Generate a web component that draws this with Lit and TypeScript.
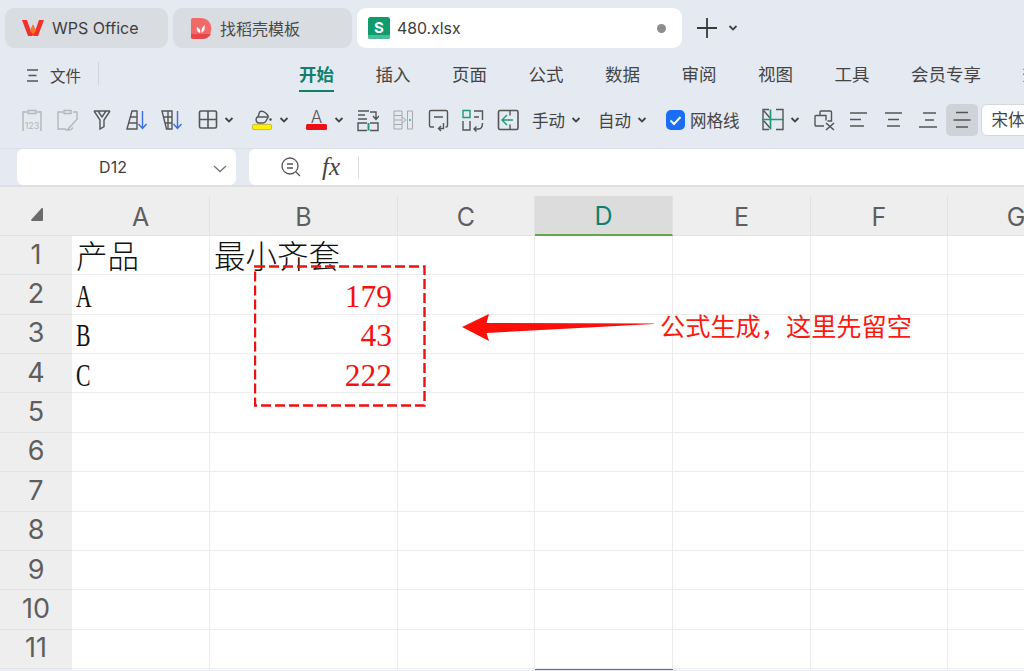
import { LitElement, css, html, svg } from "lit";
import { customElement } from "lit/decorators.js";

const COLS = ["A", "B", "C", "D", "E", "F", "G"];
const ROWS = [1, 2, 3, 4, 5, 6, 7, 8, 9, 10, 11, 12];
const RIBBON = ["开始", "插入", "页面", "公式", "数据", "审阅", "视图", "工具", "会员专享", "效率"];

const CELLS: Record<string, { text: string; kind: string }> = {
  A1: { text: "产品", kind: "cjk" },
  B1: { text: "最小齐套", kind: "cjk" },
  A2: { text: "A", kind: "latin" },
  A3: { text: "B", kind: "latin" },
  A4: { text: "C", kind: "latin" },
  B2: { text: "179", kind: "num" },
  B3: { text: "43", kind: "num" },
  B4: { text: "222", kind: "num" },
};

const icon = (body: unknown, w = 22, h = 24) =>
  html`<svg class="ico" width=${w} height=${h} viewBox="0 0 ${w} ${h}" fill="none" stroke="#555" stroke-width="1.4">${body}</svg>`;

const chev = html`<svg class="chev" width="10" height="6" viewBox="0 0 10 6" fill="none" stroke="#444" stroke-width="1.8"><path d="M1.5 1l3.5 3.5L8.5 1" /></svg>`;

const ICONS = {
  pasteValue: icon(svg`<g stroke="#b4b6b8"><path d="M6 4H2v18h1M16 4h4v18h-1M7 2.500h8v3H7z" /></g>
    <text x="11" y="21" text-anchor="middle" font-size="9" fill="#b4b6b8" stroke="none" font-family="Inter">123</text>`),
  pasteFormat: icon(svg`<g stroke="#b4b6b8"><path d="M7 4H2v17h8M17 4h4v6M8 2.500h7v3H8zM22 10l-7 8M15 18c-2 1-2 3-4 4 3 .5 5-.5 6-2.500" /></g>`),
  filter: icon(svg`<path d="M3 3h16M3 3l6 9v9l4-2.500V12l6-9M7 3l4 6 4-6" />`),
  sortAsc: icon(svg`<path d="M6 3h5v18H1zM4.500 9h6.500M3 15h8" /><path stroke="#3a6fe4" d="M16.500 3v17M12.500 16l4 4.500 4-4.500" />`),
  sortDesc: icon(svg`<path d="M1 3h10v18H5.500zM2.500 9h8.500M4 15h7M7 3v18" /><path stroke="#3a6fe4" d="M16.500 3v17M12.500 16l4 4.500 4-4.500" />`),
  borders: icon(svg`<rect x="3.500" y="3" width="17" height="17" rx="1.500" stroke-width="1.600" /><path stroke-width="1.600" d="M12 3v17M3.500 11.500h17" />`),
  fill: icon(svg`<path d="M6 9c-2 3-.5 6 2 6h4c1.500 0 2.500-1 3-2l2.500-4.500M6 9h11.500M7 9l1.500-5c2-2 6 0 8 3l1 1.500" /><circle cx="19.500" cy="11.500" r="1.200" fill="#444" stroke="none" />
    <rect x="1.400" y="16.400" width="19.200" height="5.200" rx="1.500" fill="#ffef00" stroke="#bdb12a" stroke-width=".8" />`),
  fontColor: icon(svg`<text x="10.500" y="14.500" text-anchor="middle" font-size="17" font-weight="300" fill="#555" stroke="none" font-family="Inter">A</text>
    <rect x="0" y="16" width="21" height="6" rx="1.500" fill="#ee0f14" stroke="none" />`),
  indent: icon(svg`<path d="M1 3h11M1 7h7M1 11h9M13 4h6v7M16 8l3 3.500L22 8M10 15H1v7.500h9M13 15h8v7.500h-8" /><path stroke="#1d9a77" stroke-width="2" d="M11.500 15v7.500" />`),
  split: icon(svg`<g stroke="#a9a9a9" stroke-width="1"><path d="M2 3h8v18H2zM2 7.500h8M2 12h8M2 16.500h8M10 9l4 3-4 3M15.500 3h5v18h-5z" /></g><circle cx="18" cy="12" r="1" fill="#35a584" stroke="none" />`),
  wrap: icon(svg`<path d="M7 19H4a1.500 1.500 0 0 1-1.500-1.500V4A1.500 1.500 0 0 1 4 2.500h15A1.500 1.500 0 0 1 20.500 4v13.500A1.500 1.500 0 0 1 19 19h-.5M7 9h9M16.500 15v5.500h-5M14 18l-2.500 2.500L14 23" />`),
  wrapGreen: icon(svg`<path stroke="#1d9a77" d="M1 2.500h7v7H1z" /><path d="M12 3h8.500v9M12 9h5M1 13v9h7v-9M20.500 15c0 4-2 6-4 6H12M14.500 18.500L12 21l2.500 2.500" />`),
  freeze: icon(svg`<rect x="1.500" y="2.500" width="19.500" height="19" rx="1.500" stroke-width="1.600" /><path d="M13 2.500v5M13 16.500v5" /><path stroke="#1d9a77" d="M16 12H5M10 7l-5 5 5 5" />`),
  merge: icon(svg`<path d="M7 1.500H1v20h6M14 1.500h7v20h-7M2 3l6 7M2 13l6 7" /><path stroke="#1d9a77" stroke-width="1.700" d="M0 11.500h22M8.500 1.500v20" />`),
  clear: icon(svg`<path d="M11 18H3a1 1 0 0 1-1-1V8.500a1 1 0 0 1 1-1h10v5M7 7V4a1 1 0 0 1 1-1h9.500a1 1 0 0 1 1 1v9h-4" /><path d="M13 15l8 7M21 15l-8 7" stroke-width="1.600" />`),
  left: icon(svg`<path d="M2 5h17M2 11.500h11M2 18h14" />`),
  center: icon(svg`<path d="M2 5h17M5 11.500h11M4 18h13" />`),
  right: icon(svg`<path d="M5 5h13M7 12h9M1 19h18" />`),
  middle: icon(svg`<path d="M3 4.500h12M.5 12h17M3 19h12" stroke-width="1.500" />`, 18),
};

@customElement("app-root")
export class AppRoot extends LitElement {
  static styles = css`
    :host {
      display: block;
      width: 1024px;
      height: 671px;
      overflow: hidden;
      position: relative;
      background: #e5e9f1;
      color: #3d3d3d;
      font-family: "Inter", "Noto Sans CJK SC", sans-serif;
    }

    .tabs {
      display: flex;
      align-items: center;
      gap: 5px;
      height: 40px;
      padding: 8px 0 0 5px;
    }
    .tab {
      display: flex;
      align-items: center;
      gap: 8px;
      height: 40px;
      box-sizing: border-box;
      border-radius: 9px;
      background: #d9dde2;
      font-size: 16px;
      white-space: nowrap;
    }
    .tab-wps {
      width: 163px;
      padding-left: 17px;
    }
    .tab-tpl {
      width: 179px;
      padding-left: 18px;
      color: #4a4a4a;
    }
    .tab-doc {
      width: 325px;
      gap: 7px;
      padding: 0 16px 0 11px;
      background: #fff;
      font-size: 15.800px;
    }
    .tab-dot {
      margin-left: auto;
      width: 9px;
      height: 9px;
      border-radius: 50%;
      background: #8d8d8d;
    }
    .new-tab {
      display: flex;
      align-items: center;
      gap: 11px;
      margin-left: 10px;
    }

    .menu {
      display: flex;
      align-items: flex-start;
      height: 36px;
      padding: 16px 0 0 27px;
      overflow: hidden;
    }
    .file {
      display: flex;
      align-items: center;
      gap: 12px;
      width: 71px;
      height: 22px;
      flex: none;
      font-size: 15.500px;
      color: #444;
    }
    .menu-sep {
      width: 1px;
      height: 23px;
      margin-top: -2px;
      background: #d2d6dc;
      flex: none;
    }
    .ribbon {
      display: flex;
      gap: 41.500px;
      margin-left: 200px;
      flex: none;
    }
    .ribbon-item {
      height: 28px;
      font-size: 17.500px;
      line-height: 22px;
      color: #444;
      white-space: nowrap;
    }
    .ribbon-item.active {
      color: #0f7f6b;
      font-weight: 700;
      box-sizing: border-box;
      border-bottom: 2px solid #0f7f6b;
    }

    .toolbar {
      display: flex;
      align-items: center;
      gap: 13px;
      height: 40px;
      padding: 0 0 8px 21px;
      font-size: 16.500px;
      color: #444;
      white-space: nowrap;
      overflow: hidden;
    }
    .toolbar > * {
      flex: none;
    }
    .ico,
    .chev {
      display: block;
      flex: none;
    }
    .split {
      display: flex;
      align-items: center;
      gap: 6px;
    }
    .after-split {
      margin-left: 4px;
    }
    .text-split {
      display: flex;
      align-items: center;
      gap: 6px;
      width: 53px;
    }
    .grid-toggle {
      display: flex;
      align-items: center;
      gap: 5px;
      margin-left: 2px;
      margin-right: 9px;
    }
    .check {
      width: 19px;
      height: 20px;
      border-radius: 5px;
      background: #1a6ef5;
      display: flex;
      align-items: center;
      justify-content: center;
    }
    .active-tool {
      width: 32px;
      height: 32px;
      margin-left: -7px;
      border-radius: 5px;
      background: #cfd3d8;
      display: flex;
      align-items: center;
      justify-content: center;
    }
    .font-box {
      margin-left: -10px;
      width: 60px;
      height: 32px;
      box-sizing: border-box;
      padding-left: 10px;
      line-height: 30px;
      background: #fff;
      border: 1px solid #d5d9df;
      border-radius: 6px 0 0 6px;
    }

    .formula {
      display: flex;
      gap: 13px;
      height: 37px;
      padding-left: 17px;
      border-top: 1px solid #dce0e6;
      box-sizing: border-box;
    }
    .name-box {
      position: relative;
      width: 219px;
      box-sizing: border-box;
      padding-right: 27px;
      text-align: center;
      line-height: 37px;
      font-size: 16px;
      background: #fff;
      border-radius: 6px;
    }
    .name-box .chev {
      position: absolute;
      right: 9px;
      top: 16px;
    }
    .formula-box {
      flex: 1;
      display: flex;
      align-items: center;
      background: #fff;
      border-radius: 6px 0 0 6px;
      padding-left: 32px;
      gap: 12px;
    }
    .fx {
      margin-left: 9px;
      font-family: "Liberation Serif", serif;
      font-style: italic;
      font-size: 25px;
      line-height: 30px;
      width: 24px;
      color: #444;
    }
    .formula-sep {
      width: 1px;
      height: 22px;
      background: #dcdcdc;
    }

    .sheet {
      height: 485px;
      padding-top: 9px;
      box-sizing: border-box;
      background: #eeeeee;
      border-top: 2px solid #e0e0e0;
      overflow: hidden;
    }
    .grid {
      display: grid;
      grid-template-columns: 72px 138px 188px 137px 138px 138px 137px 137px;
      grid-template-rows: 40px;
      grid-auto-rows: 39.360px;
    }
    .corner {
      display: flex;
      align-items: flex-end;
      justify-content: center;
      padding: 0 0 14px 2px;
      box-sizing: border-box;
      border-bottom: 1px solid #e2e2e2;
    }
    .col-head {
      display: flex;
      align-items: center;
      justify-content: center;
      box-sizing: border-box;
      padding-top: 2px;
      font-size: 25px;
      color: #5e5e5e;
      border-right: 1px solid #e2e2e2;
      border-bottom: 1px solid #e2e2e2;
    }
    .col-head.selected {
      background: #dcdcdc;
      color: #10806c;
      border-bottom: 2px solid #66a64d;
    }
    .row-head {
      display: flex;
      align-items: center;
      justify-content: center;
      box-sizing: border-box;
      padding-bottom: 2px;
      font-size: 27px;
      color: #5e5e5e;
      border-bottom: 1px solid #e2e2e2;
    }
    .cell {
      position: relative;
      display: flex;
      align-items: center;
      box-sizing: border-box;
      padding: 0 5px 0 4px;
      background: #fff;
      border-right: 1px solid #ececec;
      border-bottom: 1px solid #ececec;
      font-family: "Liberation Serif", "Noto Sans CJK SC", serif;
      font-size: 31px;
      color: #111;
      white-space: nowrap;
    }
    .cell.selected {
      border: 2px solid #3f9320;
    }
    .cjk {
      padding-bottom: 3px;
      font-family: "Noto Sans CJK SC", serif;
      font-size: 31.500px;
      font-weight: 300;
    }
    .latin {
      display: inline-block;
      padding-top: 5px;
      transform: scaleX(0.7);
      transform-origin: left center;
    }
    .num {
      margin-left: auto;
      padding-top: 5px;
      font-size: 31.500px;
      color: #f80f0f;
    }

    /* annotation drawn over the sheet */
    .dash-box {
      position: absolute;
      left: 254px;
      top: 265px;
    }
    .arrow {
      position: absolute;
      left: 460px;
      top: 312px;
    }
    .note {
      position: absolute;
      left: 660px;
      top: 308px;
      font-family: "Noto Sans CJK SC", sans-serif;
      font-size: 25.200px;
      line-height: 34px;
      color: #fb1a10;
      white-space: nowrap;
    }
  `;

  renderCell(col: string, row: number) {
    const key = `${col}${row}`;
    const data = CELLS[key];
    return html`<div class="cell ${key === "D12" ? "selected" : ""}">
      ${data ? html`<span class=${data.kind}>${data.text}</span>` : ""}
    </div>`;
  }

  render() {
    return html`
      <div class="tabs">
        <div class="tab tab-wps">
          <svg width="22" height="16" viewBox="0 0 22 16">
            <path fill="#f0312a" d="M0 0h5l3.500 10L11 4.500 13.500 10 17 0h5l-6 16h-4.500L11 14.500 10.500 16H6z" />
            <path fill="#fb7a2d" d="M8 11l3-6 3 6-3 3z" />
          </svg>
          <span>WPS Office</span>
        </div>
        <div class="tab tab-tpl">
          <svg width="21" height="21" viewBox="0 0 21 21">
            <path fill="#f26a67" d="M0 2a2 2 0 0 1 2-2h8a10.500 10.500 0 0 1 0 21H2a2 2 0 0 1-2-2z" />
            <path fill="#e8474a" d="M0 16h20a10.500 10.500 0 0 1-10 5H2a2 2 0 0 1-2-2z" />
            <path fill="#fff" d="M9 15c-3-1-4-4-3-6 2 1 4 3 3 6zM10.500 15c-.5-3 .5-6 3-8 1 3 0 6-3 8z" />
          </svg>
          <span>找稻壳模板</span>
        </div>
        <div class="tab tab-doc">
          <svg width="22" height="22" viewBox="0 0 22 22">
            <rect width="22" height="22" rx="2.500" fill="#0f9b6c" />
            <path fill="#4cbc93" d="M0 18h22v2a2 2 0 0 1-2 2H2a2 2 0 0 1-2-2z" />
            <text x="11" y="15.500" text-anchor="middle" font-size="15" font-weight="700" fill="#fff" font-family="Inter">S</text>
          </svg>
          <span>480.xlsx</span>
          <span class="tab-dot"></span>
        </div>
        <div class="new-tab">
          <svg width="20" height="20" viewBox="0 0 20 20" stroke="#3a3a3a" stroke-width="1.800"><path d="M10 0v20M0 10h20" /></svg>
          ${chev}
        </div>
      </div>

      <div class="menu">
        <div class="file">
          <svg width="11" height="13" viewBox="0 0 11 13" stroke="#555" stroke-width="1.300"><path d="M0 1h11M1.500 6.500h8M0 12h11" /></svg>
          <span>文件</span>
        </div>
        <div class="menu-sep"></div>
        <div class="ribbon">
          ${RIBBON.map((t, i) => html`<div class="ribbon-item ${i === 0 ? "active" : ""}">${t}</div>`)}
        </div>
      </div>

      <div class="toolbar">
        ${ICONS.pasteValue} ${ICONS.pasteFormat} ${ICONS.filter}
        ${ICONS.sortAsc} ${ICONS.sortDesc}
        <div class="split">${ICONS.borders} ${chev}</div>
        <div class="split after-split">${ICONS.fill} ${chev}</div>
        <div class="split after-split">${ICONS.fontColor} ${chev}</div>
        ${ICONS.indent} ${ICONS.split} ${ICONS.wrap} ${ICONS.wrapGreen} ${ICONS.freeze}
        <div class="text-split"><span>手动</span>${chev}</div>
        <div class="text-split"><span>自动</span>${chev}</div>
        <div class="grid-toggle">
          <span class="check">
            <svg width="13" height="11" viewBox="0 0 13 11" fill="none" stroke="#fff" stroke-width="2"><path d="M1.500 5.500l3.500 3.500 6.500-7" /></svg>
          </span>
          <span>网格线</span>
        </div>
        <div class="split">${ICONS.merge} ${chev}</div>
        ${ICONS.clear} ${ICONS.left} ${ICONS.center} ${ICONS.right}
        <div class="active-tool">${ICONS.middle}</div>
        <div class="font-box">宋体</div>
      </div>

      <div class="formula">
        <div class="name-box">
          D12
          <svg class="chev" width="14" height="8" viewBox="0 0 14 8" fill="none" stroke="#777" stroke-width="1.300"><path d="M1 1l6 5.500L13 1" /></svg>
        </div>
        <div class="formula-box">
          <svg width="20" height="20" viewBox="0 0 20 20" fill="none" stroke="#555" stroke-width="1.300">
            <circle cx="9" cy="9" r="8" /><path d="M6 7h6M6 11h6M15 15l4 4" />
          </svg>
          <span class="fx">fx</span>
          <span class="formula-sep"></span>
        </div>
      </div>

      <div class="sheet">
        <div class="grid">
          <div class="corner">
            <svg width="12" height="13" viewBox="0 0 12 13"><path fill="#6b6b6b" d="M11 0c.6 0 1 .4 1 1v11c0 .6-.4 1-1 1H1c-.8 0-1.200-.9-.6-1.500L10.300.4c.2-.3.4-.4.7-.4z" /></svg>
          </div>
          ${COLS.map((c) => html`<div class="col-head ${c === "D" ? "selected" : ""}">${c}</div>`)}
          ${ROWS.map(
            (r) => html`<div class="row-head">${r < 12 ? r : ""}</div>${COLS.map((c) => this.renderCell(c, r))}`,
          )}
        </div>
      </div>

      <svg class="dash-box" width="172" height="142" viewBox="0 0 172 142" fill="none">
        <rect x="1" y="1.500" width="169.500" height="139" stroke="#f01010" stroke-width="2.400" stroke-dasharray="10 4" />
      </svg>
      <svg class="arrow" width="196" height="32" viewBox="0 0 196 32">
        <path fill="#fb0f08" d="M2 15L29 2l-2.500 9L194 11.500v.6L26.500 21l2.500 8z" />
      </svg>
      <div class="note">公式生成，这里先留空</div>
    `;
  }
}
